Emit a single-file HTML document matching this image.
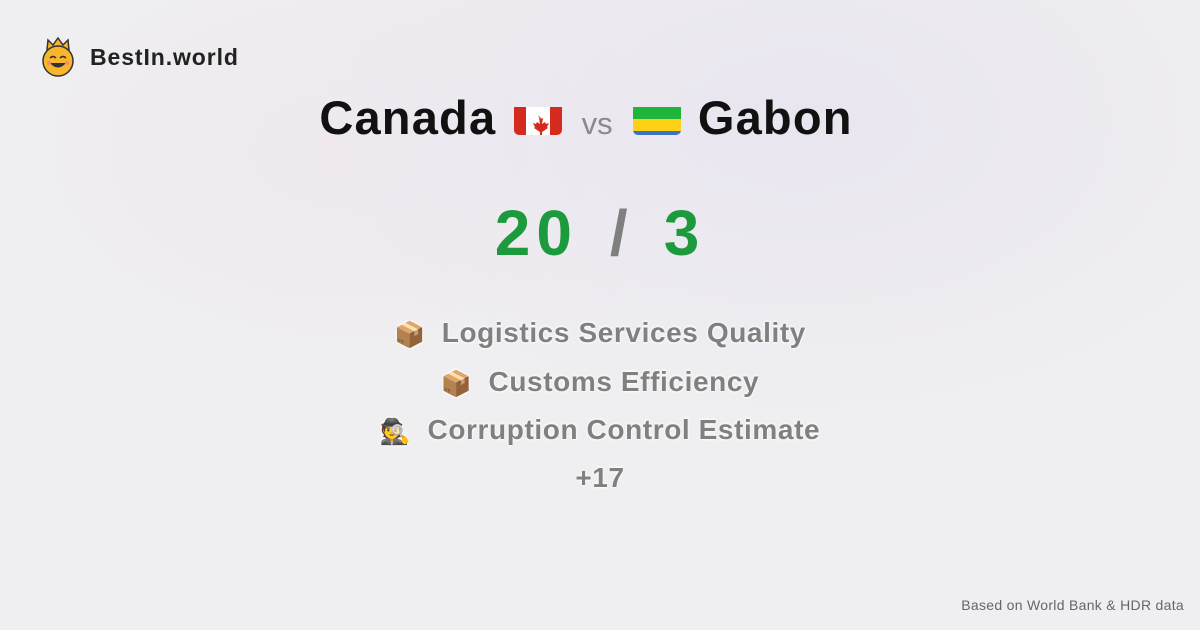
<!DOCTYPE html>
<html><head><meta charset="utf-8"><style>
*{margin:0;padding:0;box-sizing:border-box}
body{width:1200px;height:630px;overflow:hidden;font-family:"Liberation Sans",sans-serif;font-weight:bold;
background:radial-gradient(ellipse 500px 300px at 800px 120px,#e9e5f0 0%,rgba(236,234,240,0) 100%),radial-gradient(ellipse 400px 250px at 350px 150px,#efe9ef 0%,rgba(240,239,242,0) 100%),#efeff1;position:relative}
.a{position:absolute}
.logo{left:90px;top:44px;font-size:23px;letter-spacing:0.9px;color:#222}
.c{position:absolute;left:0;width:1200px;text-align:center;white-space:nowrap}
.t{top:90px;left:-14px;font-size:47px;color:#111;letter-spacing:1.2px}
.vs{font-size:31px;color:#8a8a8a;font-weight:normal;margin:0 17px;letter-spacing:0}
.flag{display:inline-block;vertical-align:-1px;width:48px;height:36px;border-radius:5px;overflow:hidden;margin:0 3px}
.n{top:201px;font-size:64px;line-height:1;color:#1e9a3e;letter-spacing:6px}
.n span{color:#7f7f7f;margin:0 30px 0 32px}
.i{font-size:28px;letter-spacing:0.6px;color:#808080;text-shadow:0 1px 2px #fff,0 -1px 2px #fff}
.e{font-size:25px;margin-right:16px;vertical-align:-1px}
.foot{right:16px;top:597px;font-size:14px;letter-spacing:0.3px;font-weight:normal;color:#666}
</style></head><body>
<div class="a" style="left:38px;top:36px;width:40px;height:42px">
<svg width="40" height="42" viewBox="0 0 40 42"><path d="M9 14 L10 4 L15 9 L20 2 L25 9 L30 4 L31 14Z" fill="#f7b62b" stroke="#333" stroke-width="1.5"/><circle cx="20" cy="25" r="15" fill="#f7b62b" stroke="#333" stroke-width="1.5"/><path d="M12 22q3-3 6 0M22 22q3-3 6 0" stroke="#333" stroke-width="1.6" fill="none"/><path d="M12 27q8 9 16 0Z" fill="#333"/><circle cx="11" cy="27" r="2" fill="#f08a7a"/><circle cx="29" cy="27" r="2" fill="#f08a7a"/></svg></div>
<div class="a logo">BestIn.world</div>
<div class="c t">Canada <span class="flag"><svg width="48" height="36" viewBox="0 0 48 36"><rect width="48" height="36" fill="#fff"/><rect width="12" height="36" fill="#d52b1e"/><rect x="36" width="12" height="36" fill="#d52b1e"/><path d="M24 8l2 4 3-1-1 6 3-2 1 2 3-1-2 4 1 1-6 4v3h-2v-3l-6-4 1-1-2-4 3 1 1-2 3 2-1-6 3 1z" fill="#d52b1e"/></svg></span><span class="vs">vs</span><span class="flag"><svg width="48" height="36" viewBox="0 0 48 36"><rect width="48" height="12" fill="#1eb53a"/><rect y="12" width="48" height="12" fill="#fcd116"/><rect y="24" width="48" height="12" fill="#3a75c4"/></svg></span> Gabon</div>
<div class="c n">20<span>/</span>3</div>
<div class="c i" style="top:317px"><span class="e">📦</span>Logistics Services Quality</div>
<div class="c i" style="top:366px"><span class="e">📦</span>Customs Efficiency</div>
<div class="c i" style="top:414px"><span class="e">🕵️</span>Corruption Control Estimate</div>
<div class="c i" style="top:462px">+17</div>
<div class="a foot">Based on World Bank &amp; HDR data</div>
</body></html>
